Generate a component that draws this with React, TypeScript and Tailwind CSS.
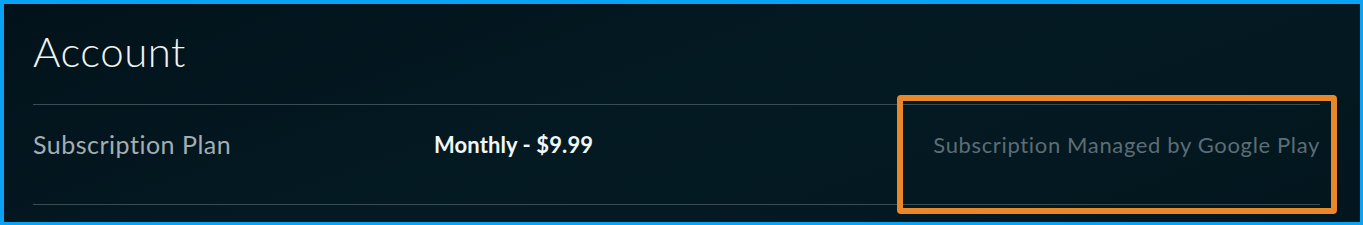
import React from "react";

export default function App() {
  return (
    <div className="relative h-[225px] w-[1363px] border-t-4 border-l-4 border-r-[3px] border-b-[3px] border-[#0aa2f5] bg-[linear-gradient(160deg,#02121a_0%,#041a23_50%,#03161e_100%)] font-['Lato',sans-serif]">
      <div className="flex h-full flex-col pl-[29px] pr-[40px]">
        <div className="flex h-[100px] items-center pb-[6px]">
          <h1 className="text-[42px] font-light leading-none tracking-[0.5px] text-[#eef3f5]">Account</h1>
        </div>
        <div className="flex h-[101px] items-center border-y border-[#3a4d55] pb-[20px]">
          <div className="w-[401px] text-[25px] leading-none text-[#a3aeb3] tracking-[0.5px]">Subscription Plan</div>
          <div className="text-[22px] font-bold leading-none text-[#f2f6f7] tracking-[0.1px]">Monthly - $9.99</div>
          <div className="ml-auto text-[22px] leading-none text-[#5d6d74] tracking-[0.65px]">Subscription Managed by Google Play</div>
        </div>
      </div>
      <div className="absolute left-[893px] top-[91px] h-[119px] w-[440px] rounded-[4px] border-[6px] border-[#e8882a]" />
    </div>
  );
}
